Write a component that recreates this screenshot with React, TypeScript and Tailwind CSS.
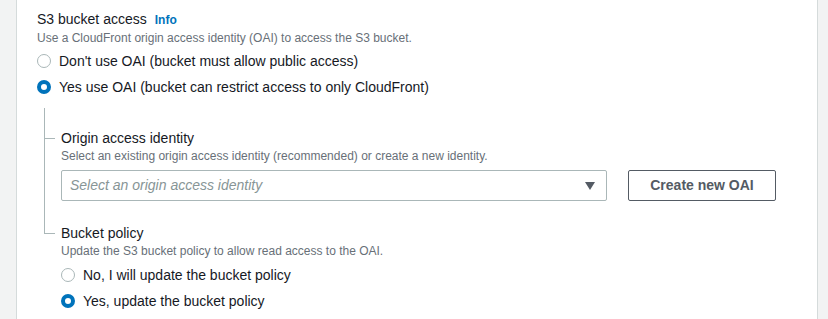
import React, { useState } from 'react';

const Radio = ({ checked, label, onClick }: { checked: boolean; label: string; onClick: () => void }) => (
    <label className="flex items-center h-[20px] cursor-pointer" onClick={onClick}>
        <span
            className={`box-border w-[14px] h-[14px] rounded-full bg-white ${
                checked ? 'border-[4px] border-[#0073bb]' : 'border-[1.5px] border-[#aab7b8]'
            }`}
        />
        <span className="ml-[8px] text-[14px] leading-[20px] text-[#16191f]">{label}</span>
    </label>
);

const App = () => {
    const [useOai, setUseOai] = useState(true);
    const [updatePolicy, setUpdatePolicy] = useState(true);

    return (
        <div
            className="flex h-[319px] w-[828px] bg-[#f2f3f3] pl-[16px] pr-[10px]"
            style={{ fontFamily: '"Liberation Sans", Arial, sans-serif' }}
        >
            <div className="flex-1 bg-white border-x border-[#d5dbdb] pl-[20px] pt-[8px]">
                {/* S3 bucket access */}
                <div className="flex items-baseline h-[22px]">
                    <span className="text-[14px] leading-[22px] text-[#16191f]">S3 bucket access</span>
                    <span className="ml-[8px] text-[12px] font-bold text-[#0073bb]">Info</span>
                </div>
                <p className="text-[12px] leading-[16px] text-[#687078]">
                    Use a CloudFront origin access identity (OAI) to access the S3 bucket.
                </p>
                <div className="flex flex-col gap-[6px] mt-[5px]">
                    <Radio checked={!useOai} label="Don't use OAI (bucket must allow public access)" onClick={() => setUseOai(false)} />
                    <Radio checked={useOai} label="Yes use OAI (bucket can restrict access to only CloudFront)" onClick={() => setUseOai(true)} />
                </div>

                {/* Nested settings */}
                <div className="relative mt-[11px] pt-[20px] pl-[24px]">
                    <span className="absolute left-[7px] top-0 h-[125px] w-px bg-[#aab7b8]" />

                    <div className="relative">
                        <span className="absolute left-[-17px] top-[10px] w-[11px] h-px bg-[#aab7b8]" />
                        <div className="text-[14px] leading-[20px] text-[#16191f]">Origin access identity</div>
                    </div>
                    <p className="text-[12px] leading-[16px] text-[#687078]">
                        Select an existing origin access identity (recommended) or create a new identity.
                    </p>
                    <div className="flex items-center mt-[6px]">
                        <div className="flex items-center justify-between w-[546px] h-[31px] border border-[#aab7b8] rounded-[2px] pl-[8px] pr-[10px]">
                            <span className="text-[14px] italic text-[#879596]">Select an origin access identity</span>
                            <svg width="12" height="10" viewBox="0 0 12 10">
                                <path d="M1 1h10L6 9z" fill="#545b64" />
                            </svg>
                        </div>
                        <button className="ml-[21px] w-[148px] h-[31px] border border-[#545b64] rounded-[2px] bg-white text-[14px] font-bold text-[#545b64]">
                            Create new OAI
                        </button>
                    </div>

                    <div className="relative mt-[22px]">
                        <span className="absolute left-[-17px] top-[10px] w-[11px] h-px bg-[#aab7b8]" />
                        <div className="text-[14px] leading-[20px] text-[#16191f]">Bucket policy</div>
                    </div>
                    <p className="text-[12px] leading-[16px] text-[#687078]">
                        Update the S3 bucket policy to allow read access to the OAI.
                    </p>
                    <div className="flex flex-col gap-[6px] mt-[6px]">
                        <Radio checked={!updatePolicy} label="No, I will update the bucket policy" onClick={() => setUpdatePolicy(false)} />
                        <Radio checked={updatePolicy} label="Yes, update the bucket policy" onClick={() => setUpdatePolicy(true)} />
                    </div>
                </div>
            </div>
        </div>
    );
};

export default App;
